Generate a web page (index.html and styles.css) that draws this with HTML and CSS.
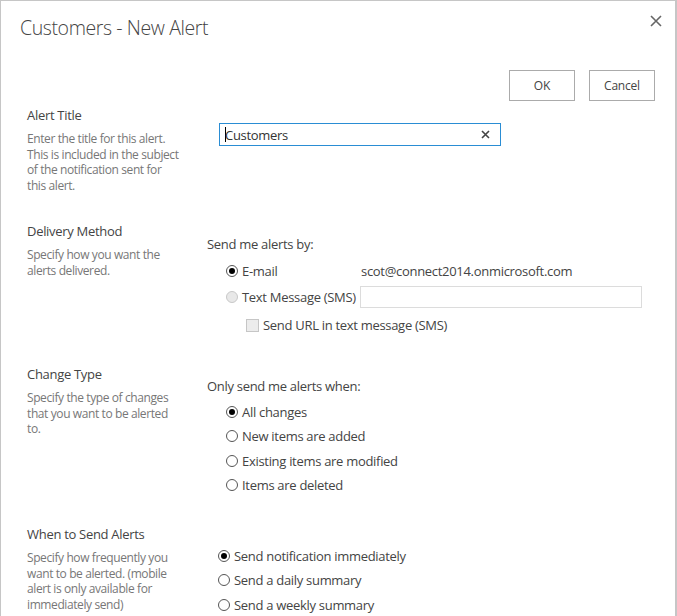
FILE: index.html
```html
<!DOCTYPE html>
<html>
<head>
<meta charset="utf-8">
<link rel="stylesheet" href="styles.css">
</head>
<body>
<div class="dialog">
  <div class="header">
    <h1 class="title">Customers - New Alert</h1>
    <svg class="close" width="12" height="12" viewBox="0 0 12 12"><path d="M1 1L11 11M11 1L1 11" stroke="#666" stroke-width="1.6" fill="none"/></svg>
  </div>
  <div class="actions">
    <button class="btn">OK</button>
    <button class="btn">Cancel</button>
  </div>

  <div class="section s1">
    <div class="left">
      <div class="label">Alert Title</div>
      <div class="desc">Enter the title for this alert.<br>This is included in the subject<br>of the notification sent for<br>this alert.</div>
    </div>
    <div class="right r1">
      <div class="textbox">
        <span class="caret"></span><span class="tb-text">Customers</span>
        <svg class="clear" width="9" height="9" viewBox="0 0 9 9"><path d="M1 1L8 8M8 1L1 8" stroke="#444" stroke-width="1.6" fill="none"/></svg>
      </div>
    </div>
  </div>

  <div class="section s2">
    <div class="left">
      <div class="label">Delivery Method</div>
      <div class="desc">Specify how you want the<br>alerts delivered.</div>
    </div>
    <div class="right r2">
      <div class="prompt">Send me alerts by:</div>
      <div class="opts indent">
        <div class="opt row-email"><span class="radio checked"></span><span class="opt-label w-email">E-mail</span><span class="addr">scot@connect2014.onmicrosoft.com</span></div>
        <div class="opt row-sms"><span class="radio disabled"></span><span class="opt-label">Text Message (SMS)</span><span class="sms-box"></span></div>
        <div class="opt row-url"><span class="check disabled"></span><span class="opt-label">Send URL in text message (SMS)</span></div>
      </div>
    </div>
  </div>

  <div class="section s3">
    <div class="left">
      <div class="label">Change Type</div>
      <div class="desc">Specify the type of changes<br>that you want to be alerted<br>to.</div>
    </div>
    <div class="right r3">
      <div class="prompt">Only send me alerts when:</div>
      <div class="opts indent list">
        <div class="opt"><span class="radio checked"></span><span class="opt-label">All changes</span></div>
        <div class="opt"><span class="radio"></span><span class="opt-label">New items are added</span></div>
        <div class="opt"><span class="radio"></span><span class="opt-label">Existing items are modified</span></div>
        <div class="opt"><span class="radio"></span><span class="opt-label">Items are deleted</span></div>
      </div>
    </div>
  </div>

  <div class="section s4">
    <div class="left">
      <div class="label">When to Send Alerts</div>
      <div class="desc">Specify how frequently you<br>want to be alerted. (mobile<br>alert is only available for<br>immediately send)</div>
    </div>
    <div class="right r4">
      <div class="opts list">
        <div class="opt"><span class="radio checked"></span><span class="opt-label">Send notification immediately</span></div>
        <div class="opt"><span class="radio"></span><span class="opt-label">Send a daily summary</span></div>
        <div class="opt"><span class="radio"></span><span class="opt-label">Send a weekly summary</span></div>
      </div>
    </div>
  </div>
</div>
</body>
</html>
```

FILE: styles.css
```css
* { box-sizing: border-box; }
html, body { margin: 0; padding: 0; background: #fff; }
body {
  font-family: "Open Sans", "Noto Sans", sans-serif;
  font-size: 13px;
  letter-spacing: -0.3px;
  color: #444;
  width: 677px;
  height: 616px;
  overflow: hidden;
}
.dialog {
  width: 677px;
  height: 640px;
  border: 1px solid #c6c6c6;
  border-right-width: 2px;
}
.header {
  position: relative;
  height: 68px;
}
.title {
  margin: 0;
  padding: 12px 0 0 19px;
  font-weight: 300;
  font-size: 19.5px;
  letter-spacing: -0.4px;
  line-height: 30px;
  color: #444;
}
.close {
  position: absolute;
  left: 649px;
  top: 14px;
}
.actions {
  display: flex;
  justify-content: flex-end;
  gap: 14px;
  padding-top: 1px;
  padding-right: 20px;
  height: 37px;
}
.btn {
  width: 66px;
  height: 31px;
  border: 1px solid #ababab;
  background: #fff;
  font-family: inherit;
  font-size: 12px;
  letter-spacing: -0.2px;
  color: #444;
  padding: 0;
}
.section {
  display: flex;
}
.left {
  width: 192px;
  padding-left: 26px;
  flex: none;
}
.label {
  font-size: 13px;
  line-height: 18px;
  color: #444;
}
.desc {
  margin-top: 7px;
  font-size: 12px;
  line-height: 15.7px;
  color: #777;
  letter-spacing: -0.4px;
}
.s1 { height: 116px; }
.s2 { height: 143px; }
.s3 { height: 160px; }
.s4 { height: 100px; }

.r1 { padding-top: 17px; }
.textbox {
  position: relative;
  margin-left: 12px;
  width: 282px;
  height: 23px;
  border: 1px solid #2a8dd4;
  display: flex;
  align-items: center;
  padding-left: 5px;
}
.caret {
  display: inline-block;
  width: 1px;
  height: 15px;
  background: #000;
  margin-right: -1px;
}
.tb-text { font-size: 13px; color: #333; }
.clear {
  position: absolute;
  left: 261px;
  top: 6px;
}

.right { padding-left: 14px; }
.r2 { padding-top: 13px; }
.r3 { padding-top: 12px; }
.r4 { padding-top: 19px; }
.prompt {
  font-size: 13px;
  line-height: 18px;
  color: #444;
}
.opts { margin-top: 5px; }
.indent { padding-left: 19px; }
.opt {
  display: flex;
  align-items: center;
  height: 26px;
  color: #444;
}
.list .opt { height: 24.3px; }
.r4 .opts { margin-top: 0; padding-left: 11px; }
.radio {
  width: 12px;
  height: 12px;
  border-radius: 50%;
  border: 1px solid #555;
  background: #fff;
  position: relative;
  flex: none;
  margin-right: 4px;
}
.radio.checked::after {
  content: "";
  position: absolute;
  left: 2px;
  top: 2px;
  width: 6px;
  height: 6px;
  border-radius: 50%;
  background: #000;
}
.radio.disabled {
  border-color: #c8c8c8;
  background: #e8e8e8;
}
.check {
  width: 13px;
  height: 13px;
  border: 1px solid #c6c6c6;
  background: #ececec;
  flex: none;
  margin-right: 4px;
}
.w-email { width: 119px; }
.addr { color: #444; }
.sms-box {
  width: 282px;
  height: 22px;
  border: 1px solid #dcdcdc;
  margin-left: 4px;
}
.row-email { height: 26px; }
.row-sms { height: 26px; }
.row-url { padding-left: 20px; height: 30px; }
```
